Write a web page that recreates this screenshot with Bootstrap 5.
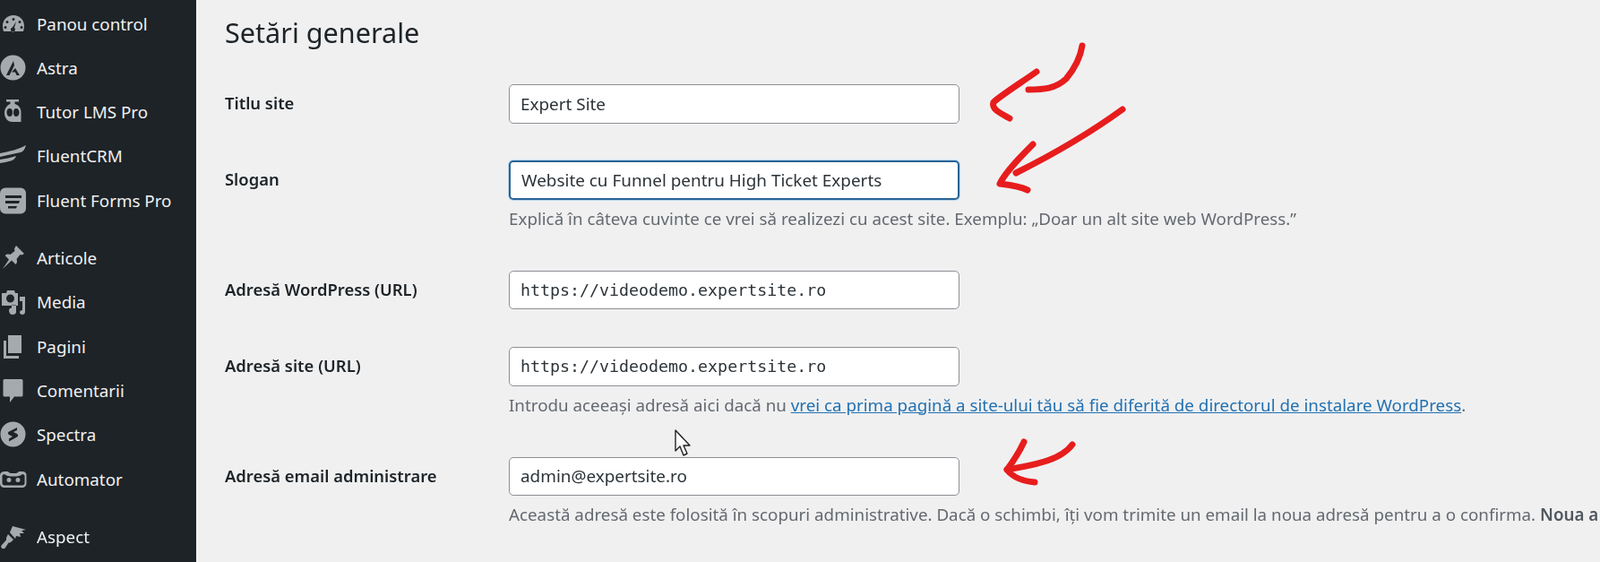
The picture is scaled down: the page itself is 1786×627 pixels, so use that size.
<!DOCTYPE html>
<html lang="ro">
<head>
<meta charset="utf-8">
<title>Setări generale</title>
<link href="https://cdn.jsdelivr.net/npm/bootstrap@5.3.0/dist/css/bootstrap.min.css" rel="stylesheet">
<style>
html,body{height:100%;overflow:hidden}
body{background:#f0f0f1;font-family:"Noto Sans","Open Sans",sans-serif;color:#1d2327}
.wp-shell{height:627px;width:1786px;overflow:hidden;position:relative;filter:blur(.35px)}
.wp-side{width:219px;flex:none;background:#1d2327;padding-top:2px;height:627px}
.wp-item{height:49.3px;color:#f0f0f1;font-size:18.8px;text-decoration:none;white-space:nowrap}
.wp-item:hover{color:#f0f0f1}
.wp-item svg{width:30px;height:30px;flex:none;margin-right:11px;fill:#a7aaad}
.wp-gap{margin-top:15px}
.wp-main{padding-left:32px;flex:1;min-width:0}
.wp-title{font-size:30.6px;font-weight:400;line-height:40px;margin:16px 0 38px;color:#1d2327}
.wp-row{margin-bottom:43px}
.wp-row-tight{margin-bottom:41.5px}
.wp-row-snug{margin-bottom:42px}
.wp-label{width:317px;flex:none;font-size:18.4px;font-weight:600;white-space:nowrap;height:43px;line-height:41px}
.wp-field{flex:none;width:1300px}
.wp-input.form-control{width:503px;height:43.5px;border:1.5px solid #8c8f94;border-radius:5px;padding:0 12px;font-size:18.9px;color:#2c3338;background:#fff;box-shadow:none}
.wp-input.wp-focus{border:2px solid #2a6496;box-shadow:0 0 0 1px #b9d6ec}
.wp-input.wp-mono{font-family:"DejaVu Sans Mono",monospace;font-size:18.3px}
.wp-help{margin:10px 0 3px;font-size:18.8px;line-height:23px;color:#646970;white-space:nowrap}
.wp-help a{color:#2271b1}
.wp-help strong{font-weight:600;color:#50575e}
.wp-marks{position:absolute;left:0;top:0;pointer-events:none}
.wp-arrow{fill:none;stroke:#e71d1d;stroke-width:7;stroke-linecap:round;stroke-linejoin:round}
.wp-cursor{fill:#fff;stroke:#222;stroke-width:1.4;stroke-linejoin:round}
</style>
</head>
<body>
<div class="wp-shell d-flex">
  <nav class="wp-side d-flex flex-column">
    <a class="wp-item d-flex align-items-center" href="#"><svg viewBox="0 0 30 30"><path fill-rule="evenodd" d="M15 5C8 5 3 10 3 17c0 2 .3 4 1 6h22c.7-2 1-4 1-6 0-7-5-12-12-12zM15 8a1.500 1.500 0 1 1 0 3 1.500 1.500 0 0 1 0-3zM8 11a1.500 1.500 0 1 1 0 3 1.500 1.500 0 0 1 0-3zM22 11a1.500 1.500 0 1 1 0 3 1.500 1.500 0 0 1 0-3zM6 17a1.500 1.500 0 1 1 0 3 1.500 1.500 0 0 1 0-3zM24 17a1.500 1.500 0 1 1 0 3 1.500 1.500 0 0 1 0-3zM18 12l-2 7a2.500 2.500 0 1 1-2-.5z"/></svg>Panou control</a>
    <a class="wp-item d-flex align-items-center" href="#"><svg viewBox="0 0 30 30"><path fill-rule="evenodd" d="M14.500 0.500a14 14 0 1 1 0 28 14 14 0 0 1 0-28zM15 7L7 23h3.500L16 12zM17 15l-4 4.500h4l1.500 3.500H22z"/></svg>Astra</a>
    <a class="wp-item d-flex align-items-center" href="#"><svg viewBox="0 0 30 30"><path fill-rule="evenodd" d="M7 1h14v2.500h-4.500V6c4 1 7 4.500 7 9v11h-9.500C8 26 5 21 5 16c0-4.500 3-9 6.500-10V3.500H7zM11 11c-2.500 0-3.500 2-3.500 4.500S9 20 11 20s3-2 3-4.500-1-4.500-3-4.500zM18 11c-2 0-3 2-3 4.500s1 4.500 3 4.500 3.500-2 3.500-4.500S20 11 18 11z"/></svg>Tutor LMS Pro</a>
    <a class="wp-item d-flex align-items-center" href="#"><svg viewBox="0 0 30 30"><path d="M0 11C10 9 20 7 29 2c-1 4-3 7-6 8-8 2-16 3-23 5zM0 18c6-1 12-2 18-4-1 3-3 4.500-6 5.500-4 1-8 2-12 2.500z"/></svg>FluentCRM</a>
    <a class="wp-item d-flex align-items-center" href="#"><svg viewBox="0 0 30 30"><path fill-rule="evenodd" d="M6 .5h17a6 6 0 0 1 6 6v17a6 6 0 0 1-6 6H6a6 6 0 0 1-6-6v-17a6 6 0 0 1 6-6zM6 9v3h18V9zM6 15v3h15l1-3zM9 21v2.500h9l1-2.500z"/></svg>Fluent Forms Pro</a>
    <a class="wp-item wp-gap d-flex align-items-center" href="#"><svg viewBox="0 0 30 30"><path d="M18 1l9 9-2.500 1.500-2-.5-4 5c1 2.500.5 4.500-1 6l-4.500-4.500L3 27l7-10.500L5.500 12c1.500-1.500 3.500-2 6-1l5-4-.5-2.500z"/></svg>Articole</a>
    <a class="wp-item d-flex align-items-center" href="#"><svg viewBox="0 0 30 30"><path fill-rule="evenodd" d="M2 5h5l1-3h8l1 3h3v14H2zM11.500 6.500a4.500 4.500 0 1 0 0 9 4.500 4.500 0 0 0 0-9zM22 9h6v17c0 2-1.500 3-3 3s-3-1-3-2.500 1.500-2.500 3-2.500v-10h-3zM10 24c0-1.500 1.500-2.500 3-2.500v-3h5V26c0 2-1.500 3-4 3-2.500 0-4-2-4-5z"/></svg>Media</a>
    <a class="wp-item d-flex align-items-center" href="#"><svg viewBox="0 0 30 30"><path fill-rule="evenodd" d="M9 2h15v20H9zM4 8h3v17h14v3H4z"/></svg>Pagini</a>
    <a class="wp-item d-flex align-items-center" href="#"><svg viewBox="0 0 30 30"><path d="M5 2h19a1.500 1.500 0 0 1 1.500 1.500V20a1.500 1.500 0 0 1-1.500 1.500H16L11 28v-6.500H5A1.500 1.500 0 0 1 3.500 20V3.500A1.500 1.500 0 0 1 5 2z"/></svg>Comentarii</a>
    <a class="wp-item d-flex align-items-center" href="#"><svg viewBox="0 0 30 30"><path fill-rule="evenodd" d="M14.500 .5a14 14 0 1 1 0 28 14 14 0 0 1 0-28zM19 7l-9 4.500c-1.500 1-1.500 2.500 0 3.500l4 2-4 2.500v3l9-5c1.500-1 1.500-2.500 0-3.500l-4-2 4-2z"/></svg>Spectra</a>
    <a class="wp-item d-flex align-items-center" href="#"><svg viewBox="0 0 30 30"><path fill-rule="evenodd" d="M5 6h4c1 1.500 2 2 6 2s5-.5 6-2h4c3 0 4.500 2 4.500 4v9c0 3-2 5-5 5H5c-3 0-5-2-5-5v-9c0-2 2-4 5-4zM5 9c-1.500 0-2.500 1-2.500 2v8c0 1.500 1 2.500 2.500 2.500h20c1.500 0 2.500-1 2.500-2.500v-8c0-1-1-2-2.500-2-2 2-5 2.500-10 2.500S7 11 5 9zM10 13a2.500 2.500 0 1 1 0 5 2.500 2.500 0 0 1 0-5zM20 13a2.500 2.500 0 1 1 0 5 2.500 2.500 0 0 1 0-5z"/></svg>Automator</a>
    <a class="wp-item wp-gap d-flex align-items-center" href="#"><svg viewBox="0 0 30 30"><path d="M14 3l15 4-5 1 3 3-5 0 1 4-5-1-1 3-6-7zM9 12l6 6-2 2c-1 1-2.500 1.500-3.500 1.500L6 27c-1 1.500-3 1.500-4 .5s-1-2.500 0-3.500l5-5.500C7 17 7 15 8 14z"/></svg>Aspect</a>
  </nav>
  <main class="wp-main">
    <h1 class="wp-title">Setări generale</h1>
    <div class="wp-row-tight d-flex">
      <label class="wp-label" for="f1">Titlu site</label>
      <div class="wp-field"><input id="f1" class="form-control wp-input" value="Expert Site"></div>
    </div>
    <div class="wp-row d-flex">
      <label class="wp-label" for="f2">Slogan</label>
      <div class="wp-field"><input id="f2" class="form-control wp-input wp-focus" value="Website cu Funnel pentru High Ticket Experts">
        <p class="wp-help">Explică în câteva cuvinte ce vrei să realizezi cu acest site. Exemplu: „Doar un alt site web WordPress.”</p></div>
    </div>
    <div class="wp-row-snug d-flex">
      <label class="wp-label" for="f3">Adresă WordPress (URL)</label>
      <div class="wp-field"><input id="f3" class="form-control wp-input wp-mono" value="https://videodemo.expertsite.ro"></div>
    </div>
    <div class="wp-row d-flex">
      <label class="wp-label" for="f4">Adresă site (URL)</label>
      <div class="wp-field"><input id="f4" class="form-control wp-input wp-mono" value="https://videodemo.expertsite.ro">
        <p class="wp-help">Introdu aceeași adresă aici dacă nu <a href="#">vrei ca prima pagină a site-ului tău să fie diferită de directorul de instalare WordPress</a>.</p></div>
    </div>
    <div class="wp-row d-flex">
      <label class="wp-label" for="f5">Adresă email administrare</label>
      <div class="wp-field"><input id="f5" class="form-control wp-input" value="admin@expertsite.ro">
        <p class="wp-help">Această adresă este folosită în scopuri administrative. Dacă o schimbi, îți vom trimite un email la noua adresă pentru a o confirma. <strong>Noua a</strong></p></div>
    </div>
  </main>
  <svg class="wp-marks" width="1786" height="627" viewBox="0 0 1786 627" aria-hidden="true">
    <path class="wp-arrow" d="M1208 51C1206 64 1200 76 1190 88C1178 99 1165 100 1148 100"/>
    <path class="wp-arrow" d="M1157 80C1140 92 1118 106 1109 114C1106 122 1118 127 1127 132"/>
    <path class="wp-arrow" d="M1253 122C1220 146 1180 170 1134 193"/>
    <path class="wp-arrow" d="M1153 161C1140 174 1122 192 1116 205C1125 206 1137 207 1147 212"/>
    <path class="wp-arrow" d="M1197 496C1185 512 1160 518 1124 524"/>
    <path class="wp-arrow" d="M1143 493C1138 504 1130 516 1124 524C1130 532 1142 537 1155 538"/>
    <path class="wp-cursor" d="M754 480V503L759 498L763 508L767 506L763 497H770Z"/>
  </svg>
</div>
<script src="https://cdn.jsdelivr.net/npm/bootstrap@5.3.0/dist/js/bootstrap.bundle.min.js"></script>
</body>
</html>
